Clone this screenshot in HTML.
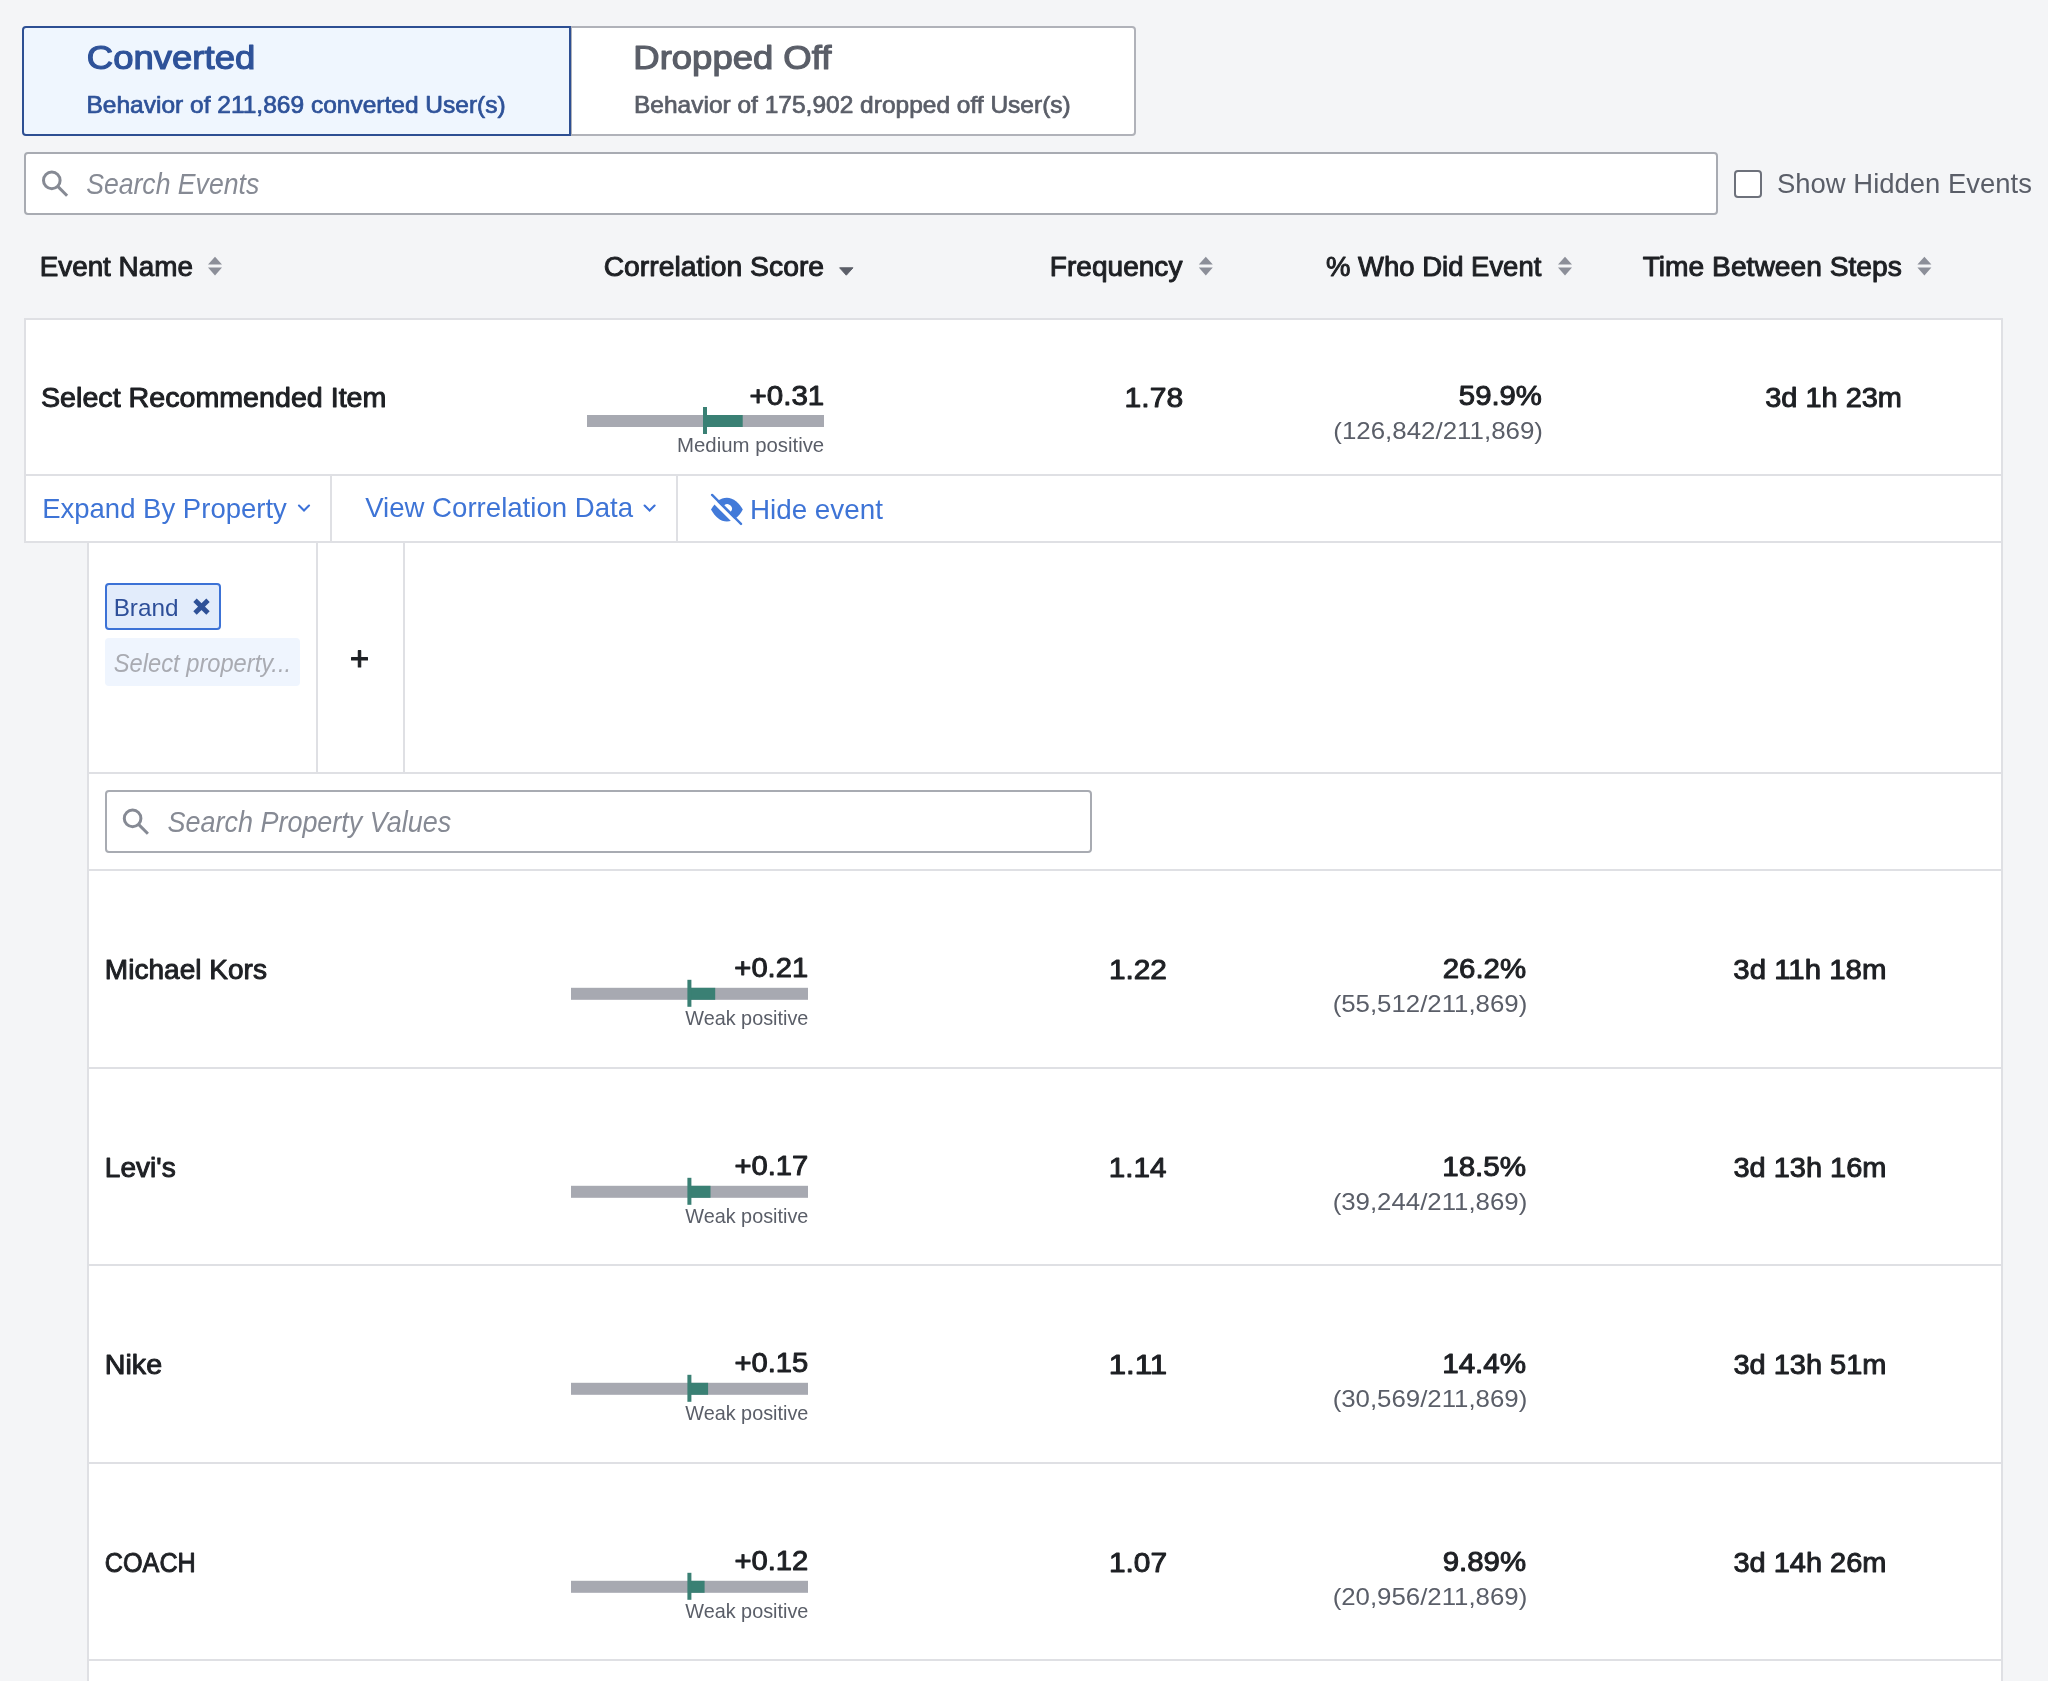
<!DOCTYPE html>
<html lang="en"><head><meta charset="utf-8"><title>Funnel Conversion Drivers</title>
<style>
html,body{margin:0;padding:0}
body{width:2048px;height:1681px;overflow:hidden;position:relative;background:#f4f5f7;font-family:"Liberation Sans", sans-serif}
.b{position:absolute;box-sizing:content-box}
svg{position:absolute;left:0;top:0;font-family:"Liberation Sans", sans-serif;will-change:transform}
</style></head><body>
<div class="b" style="left:570px;top:26px;width:561.5px;height:105.5px;background:#ffffff;border:2px solid #b0b2b9;border-radius:0 4px 4px 0;"></div>
<div class="b" style="left:22px;top:26px;width:545px;height:106px;background:#eff6fe;border:2px solid #2d4f93;border-radius:4px 0 0 4px;"></div>
<div class="b" style="left:24px;top:152px;width:1690px;height:59px;background:#fff;border:2px solid #a8abb2;border-radius:4px;"></div>
<div class="b" style="left:1734px;top:170px;width:24px;height:23.5px;background:#fff;border:2px solid #6d717b;border-radius:4px;"></div>
<div class="b" style="left:24px;top:318px;width:1974.8px;height:221px;background:#fff;border:2px solid #dfe0e4;"></div>
<div class="b" style="left:26px;top:474px;width:1975px;height:2px;background:#dfe0e4"></div>
<div class="b" style="left:330px;top:476px;width:2px;height:65px;background:#dfe0e4"></div>
<div class="b" style="left:676px;top:476px;width:2px;height:65px;background:#dfe0e4"></div>
<div class="b" style="left:87px;top:541px;width:1911.8px;height:1196px;background:#fff;border:2px solid #dfe0e4;"></div>
<div class="b" style="left:316px;top:543px;width:2px;height:229px;background:#dfe0e4"></div>
<div class="b" style="left:403px;top:543px;width:2px;height:229px;background:#dfe0e4"></div>
<div class="b" style="left:89px;top:772px;width:1912px;height:2px;background:#dfe0e4"></div>
<div class="b" style="left:89px;top:869px;width:1912px;height:2px;background:#dfe0e4"></div>
<div class="b" style="left:89px;top:1067px;width:1912px;height:2px;background:#dfe0e4"></div>
<div class="b" style="left:89px;top:1264px;width:1912px;height:2px;background:#dfe0e4"></div>
<div class="b" style="left:89px;top:1462px;width:1912px;height:2px;background:#dfe0e4"></div>
<div class="b" style="left:89px;top:1659px;width:1912px;height:2px;background:#dfe0e4"></div>
<div class="b" style="left:105px;top:583px;width:112px;height:43px;background:#e2ecfb;border:2px solid #3c72d6;border-radius:4px;"></div>
<div class="b" style="left:105px;top:638px;width:194.8px;height:47.5px;background:#eff5fe;border-radius:4px;"></div>
<div class="b" style="left:104.5px;top:790px;width:983px;height:59px;background:#fff;border:2px solid #a8abb2;border-radius:4px;"></div>
<svg width="2048" height="1681" viewBox="0 0 2048 1681">
<g fill="none" stroke="#868a94" stroke-width="3"><circle cx="51.8" cy="180.4" r="8.3"/><path d="M58.0,186.6 L67.1,195.70000000000002" stroke-linecap="butt"/></g>
<path d="M215,256.8 L222,264.6 L208,264.6 Z M208,267.4 L222,267.4 L215,275.4 Z" fill="#8c8f99"/>
<path d="M839.6,267.8 L853,267.8 L846.3,275.2 Z" fill="#5c5f69" stroke="#5c5f69" stroke-width="1" stroke-linejoin="round"/>
<path d="M1205.8,256.8 L1212.8,264.6 L1198.8,264.6 Z M1198.8,267.4 L1212.8,267.4 L1205.8,275.4 Z" fill="#8c8f99"/>
<path d="M1565,256.8 L1572,264.6 L1558,264.6 Z M1558,267.4 L1572,267.4 L1565,275.4 Z" fill="#8c8f99"/>
<path d="M1924.4,256.8 L1931.4,264.6 L1917.4,264.6 Z M1917.4,267.4 L1931.4,267.4 L1924.4,275.4 Z" fill="#8c8f99"/>
<rect x="587" y="415" width="237" height="12" fill="#a7a9b1"/>
<rect x="705" y="415" width="37.7" height="12" fill="#3a8074"/>
<rect x="703" y="407" width="4" height="27" fill="#3a8074"/>
<path d="M299.0,505.5 L304,510.5 L309.0,505.5" fill="none" stroke="#3b71d8" stroke-width="2.1" stroke-linecap="round" stroke-linejoin="miter"/>
<path d="M644.6,505.5 L649.6,510.5 L654.6,505.5" fill="none" stroke="#3b71d8" stroke-width="2.1" stroke-linecap="round" stroke-linejoin="miter"/>
<g fill="#427ad9">
<clipPath id="eyeA"><path d="M700,484.57 L760,544.57 L760,470 L700,470 Z"/></clipPath>
<clipPath id="eyeB"><path d="M700,490.1 L760,550.1 L700,550.1 Z"/></clipPath>
<path id="lens" d="M711.0,509.4 C715,502.5 720.5,497.8 726.8,497.8 C733.5,497.8 739.3,503 742.8,509.6 C739.3,516.5 733.5,521.5 726.8,521.5 C720.5,521.5 715,516.5 711.0,509.4 Z" clip-path="url(#eyeA)"/>
<path d="M711.0,509.4 C715,502.5 720.5,497.8 726.8,497.8 C733.5,497.8 739.3,503 742.8,509.6 C739.3,516.5 733.5,521.5 726.8,521.5 C720.5,521.5 715,516.5 711.0,509.4 Z" clip-path="url(#eyeB)"/>
<path d="M724.15,505.35 A4.6,4.6 0 0 1 730.65,511.85 Z" fill="#fff"/>
<path d="M712.1,494.9 L741.0,523.9" stroke="#427ad9" stroke-width="2.35" stroke-linecap="round" fill="none"/>
</g>
<path d="M195.0,600.2 L208.0,613.0 M208.0,600.2 L195.0,613.0" stroke="#2f5197" stroke-width="4.8" stroke-linecap="butt" fill="none"/>
<g fill="none" stroke="#868a94" stroke-width="3"><circle cx="132.6" cy="818.4" r="8.3"/><path d="M138.79999999999998,824.6 L147.9,833.6999999999999" stroke-linecap="butt"/></g>
<rect x="571" y="987.8" width="237" height="12" fill="#a7a9b1"/>
<rect x="689.4" y="987.8" width="25.8" height="12" fill="#3a8074"/>
<rect x="687.4" y="979.8" width="4" height="27" fill="#3a8074"/>
<rect x="571" y="1185.8" width="237" height="12" fill="#a7a9b1"/>
<rect x="689.4" y="1185.8" width="21.1" height="12" fill="#3a8074"/>
<rect x="687.4" y="1177.8" width="4" height="27" fill="#3a8074"/>
<rect x="571" y="1382.8" width="237" height="12" fill="#a7a9b1"/>
<rect x="689.4" y="1382.8" width="18.7" height="12" fill="#3a8074"/>
<rect x="687.4" y="1374.8" width="4" height="27" fill="#3a8074"/>
<rect x="571" y="1580.8" width="237" height="12" fill="#a7a9b1"/>
<rect x="689.4" y="1580.8" width="15.2" height="12" fill="#3a8074"/>
<rect x="687.4" y="1572.8" width="4" height="27" fill="#3a8074"/>
<text x="86.83" y="68.7" font-size="33.8" fill="#2e5299" stroke="#2e5299" stroke-width="1.21" stroke-linejoin="round" textLength="168.47" lengthAdjust="spacingAndGlyphs">Converted</text>
<text x="86.47" y="112.7" font-size="24" fill="#2e5299" stroke="#2e5299" stroke-width="0.73" stroke-linejoin="round" textLength="419.22" lengthAdjust="spacingAndGlyphs">Behavior of 211,869 converted User(s)</text>
<text x="633.36" y="68.7" font-size="33.8" fill="#5a5e68" stroke="#5a5e68" stroke-width="1.21" stroke-linejoin="round" textLength="197.97" lengthAdjust="spacingAndGlyphs">Dropped Off</text>
<text x="633.99" y="112.7" font-size="24" fill="#5a5e68" stroke="#5a5e68" stroke-width="0.73" stroke-linejoin="round" textLength="436.74" lengthAdjust="spacingAndGlyphs">Behavior of 175,902 dropped off User(s)</text>
<text x="86.18" y="193.9" font-size="29.6" fill="#868a94" font-style="italic" textLength="173.02" lengthAdjust="spacingAndGlyphs">Search Events</text>
<text x="1777.01" y="193.1" font-size="28" fill="#5a5e68" textLength="254.86" lengthAdjust="spacingAndGlyphs">Show Hidden Events</text>
<text x="39.67" y="276.3" font-size="27.0" fill="#1e2024" stroke="#1e2024" stroke-width="0.96" stroke-linejoin="round" textLength="153.22" lengthAdjust="spacingAndGlyphs">Event Name</text>
<text x="603.67" y="276.3" font-size="27.0" fill="#1e2024" stroke="#1e2024" stroke-width="0.96" stroke-linejoin="round" textLength="220.41" lengthAdjust="spacingAndGlyphs">Correlation Score</text>
<text x="1049.87" y="276.3" font-size="27.0" fill="#1e2024" stroke="#1e2024" stroke-width="0.96" stroke-linejoin="round" textLength="132.59" lengthAdjust="spacingAndGlyphs">Frequency</text>
<text x="1325.98" y="276.3" font-size="27.0" fill="#1e2024" stroke="#1e2024" stroke-width="0.96" stroke-linejoin="round" textLength="215.37" lengthAdjust="spacingAndGlyphs">% Who Did Event</text>
<text x="1642.66" y="276.3" font-size="27.0" fill="#1e2024" stroke="#1e2024" stroke-width="0.96" stroke-linejoin="round" textLength="259.10" lengthAdjust="spacingAndGlyphs">Time Between Steps</text>
<text x="41.03" y="407" font-size="27.0" fill="#1e2024" stroke="#1e2024" stroke-width="0.96" stroke-linejoin="round" textLength="345.40" lengthAdjust="spacingAndGlyphs">Select Recommended Item</text>
<text x="749.56" y="405" font-size="27.0" fill="#1e2024" stroke="#1e2024" stroke-width="0.96" stroke-linejoin="round" textLength="74.68" lengthAdjust="spacingAndGlyphs">+0.31</text>
<text x="677.03" y="452.2" font-size="19.8" fill="#5a5e68" textLength="147.18" lengthAdjust="spacingAndGlyphs">Medium positive</text>
<text x="1124.58" y="406.5" font-size="27.0" fill="#1e2024" stroke="#1e2024" stroke-width="0.96" stroke-linejoin="round" textLength="58.54" lengthAdjust="spacingAndGlyphs">1.78</text>
<text x="1458.87" y="405.2" font-size="27.0" fill="#1e2024" stroke="#1e2024" stroke-width="0.96" stroke-linejoin="round" textLength="83.05" lengthAdjust="spacingAndGlyphs">59.9%</text>
<text x="1333.29" y="438.9" font-size="24" fill="#5a5e68" textLength="209.70" lengthAdjust="spacingAndGlyphs">(126,842/211,869)</text>
<text x="1765.29" y="406.9" font-size="27.0" fill="#1e2024" stroke="#1e2024" stroke-width="0.96" stroke-linejoin="round" textLength="136.68" lengthAdjust="spacingAndGlyphs">3d 1h 23m</text>
<text x="42.16" y="517.5" font-size="28" fill="#3e74d6" textLength="244.70" lengthAdjust="spacingAndGlyphs">Expand By Property</text>
<text x="365.15" y="517.0" font-size="28" fill="#3e74d6" textLength="267.92" lengthAdjust="spacingAndGlyphs">View Correlation Data</text>
<text x="749.94" y="519.2" font-size="28" fill="#3e74d6" textLength="132.96" lengthAdjust="spacingAndGlyphs">Hide event</text>
<text x="113.67" y="616.2" font-size="24" fill="#2e4f99" textLength="64.87" lengthAdjust="spacingAndGlyphs">Brand</text>
<text x="113.83" y="672.0" font-size="25.2" fill="#a9abb2" font-style="italic" textLength="177.26" lengthAdjust="spacingAndGlyphs">Select property...</text>
<text x="350.12" y="670.0" font-size="33.3" fill="#1e2024" stroke="#1e2024" stroke-width="1.19" stroke-linejoin="round" textLength="19.05" lengthAdjust="spacingAndGlyphs">+</text>
<text x="167.54" y="831.6" font-size="29.6" fill="#868a94" font-style="italic" textLength="283.70" lengthAdjust="spacingAndGlyphs">Search Property Values</text>
<text x="104.85" y="979.0" font-size="27.0" fill="#1e2024" stroke="#1e2024" stroke-width="0.96" stroke-linejoin="round" textLength="162.06" lengthAdjust="spacingAndGlyphs">Michael Kors</text>
<text x="734.39" y="977.0" font-size="27.0" fill="#1e2024" stroke="#1e2024" stroke-width="0.96" stroke-linejoin="round" textLength="73.72" lengthAdjust="spacingAndGlyphs">+0.21</text>
<text x="685.28" y="1025.2" font-size="19.8" fill="#5a5e68" textLength="123.11" lengthAdjust="spacingAndGlyphs">Weak positive</text>
<text x="1108.90" y="979.0" font-size="27.0" fill="#1e2024" stroke="#1e2024" stroke-width="0.96" stroke-linejoin="round" textLength="58.09" lengthAdjust="spacingAndGlyphs">1.22</text>
<text x="1442.75" y="978" font-size="27.0" fill="#1e2024" stroke="#1e2024" stroke-width="0.96" stroke-linejoin="round" textLength="83.34" lengthAdjust="spacingAndGlyphs">26.2%</text>
<text x="1332.66" y="1011.6" font-size="24" fill="#5a5e68" textLength="194.57" lengthAdjust="spacingAndGlyphs">(55,512/211,869)</text>
<text x="1733.38" y="979.0" font-size="27.0" fill="#1e2024" stroke="#1e2024" stroke-width="0.96" stroke-linejoin="round" textLength="153.00" lengthAdjust="spacingAndGlyphs">3d 11h 18m</text>
<text x="104.86" y="1177.0" font-size="27.0" fill="#1e2024" stroke="#1e2024" stroke-width="0.96" stroke-linejoin="round" textLength="70.80" lengthAdjust="spacingAndGlyphs">Levi's</text>
<text x="734.40" y="1175.0" font-size="27.0" fill="#1e2024" stroke="#1e2024" stroke-width="0.96" stroke-linejoin="round" textLength="73.83" lengthAdjust="spacingAndGlyphs">+0.17</text>
<text x="685.28" y="1223.2" font-size="19.8" fill="#5a5e68" textLength="123.11" lengthAdjust="spacingAndGlyphs">Weak positive</text>
<text x="1108.80" y="1177.0" font-size="27.0" fill="#1e2024" stroke="#1e2024" stroke-width="0.96" stroke-linejoin="round" textLength="57.68" lengthAdjust="spacingAndGlyphs">1.14</text>
<text x="1442.21" y="1176" font-size="27.0" fill="#1e2024" stroke="#1e2024" stroke-width="0.96" stroke-linejoin="round" textLength="83.93" lengthAdjust="spacingAndGlyphs">18.5%</text>
<text x="1332.66" y="1209.6" font-size="24" fill="#5a5e68" textLength="194.57" lengthAdjust="spacingAndGlyphs">(39,244/211,869)</text>
<text x="1733.51" y="1177.0" font-size="27.0" fill="#1e2024" stroke="#1e2024" stroke-width="0.96" stroke-linejoin="round" textLength="152.91" lengthAdjust="spacingAndGlyphs">3d 13h 16m</text>
<text x="104.81" y="1374.0" font-size="27.0" fill="#1e2024" stroke="#1e2024" stroke-width="0.96" stroke-linejoin="round" textLength="57.33" lengthAdjust="spacingAndGlyphs">Nike</text>
<text x="734.40" y="1372.0" font-size="27.0" fill="#1e2024" stroke="#1e2024" stroke-width="0.96" stroke-linejoin="round" textLength="73.81" lengthAdjust="spacingAndGlyphs">+0.15</text>
<text x="685.28" y="1420.2" font-size="19.8" fill="#5a5e68" textLength="123.11" lengthAdjust="spacingAndGlyphs">Weak positive</text>
<text x="1108.73" y="1374.0" font-size="27.0" fill="#1e2024" stroke="#1e2024" stroke-width="0.96" stroke-linejoin="round" textLength="58.30" lengthAdjust="spacingAndGlyphs">1.11</text>
<text x="1442.21" y="1373" font-size="27.0" fill="#1e2024" stroke="#1e2024" stroke-width="0.96" stroke-linejoin="round" textLength="83.93" lengthAdjust="spacingAndGlyphs">14.4%</text>
<text x="1332.66" y="1406.6" font-size="24" fill="#5a5e68" textLength="194.57" lengthAdjust="spacingAndGlyphs">(30,569/211,869)</text>
<text x="1733.51" y="1374.0" font-size="27.0" fill="#1e2024" stroke="#1e2024" stroke-width="0.96" stroke-linejoin="round" textLength="152.91" lengthAdjust="spacingAndGlyphs">3d 13h 51m</text>
<text x="104.84" y="1572.0" font-size="27.0" fill="#1e2024" stroke="#1e2024" stroke-width="0.96" stroke-linejoin="round" textLength="90.98" lengthAdjust="spacingAndGlyphs">COACH</text>
<text x="734.40" y="1570.0" font-size="27.0" fill="#1e2024" stroke="#1e2024" stroke-width="0.96" stroke-linejoin="round" textLength="73.83" lengthAdjust="spacingAndGlyphs">+0.12</text>
<text x="685.28" y="1618.2" font-size="19.8" fill="#5a5e68" textLength="123.11" lengthAdjust="spacingAndGlyphs">Weak positive</text>
<text x="1108.90" y="1572.0" font-size="27.0" fill="#1e2024" stroke="#1e2024" stroke-width="0.96" stroke-linejoin="round" textLength="58.10" lengthAdjust="spacingAndGlyphs">1.07</text>
<text x="1442.76" y="1571" font-size="27.0" fill="#1e2024" stroke="#1e2024" stroke-width="0.96" stroke-linejoin="round" textLength="83.31" lengthAdjust="spacingAndGlyphs">9.89%</text>
<text x="1332.66" y="1604.6" font-size="24" fill="#5a5e68" textLength="194.57" lengthAdjust="spacingAndGlyphs">(20,956/211,869)</text>
<text x="1733.51" y="1572.0" font-size="27.0" fill="#1e2024" stroke="#1e2024" stroke-width="0.96" stroke-linejoin="round" textLength="152.91" lengthAdjust="spacingAndGlyphs">3d 14h 26m</text>
</svg>
</body></html>
